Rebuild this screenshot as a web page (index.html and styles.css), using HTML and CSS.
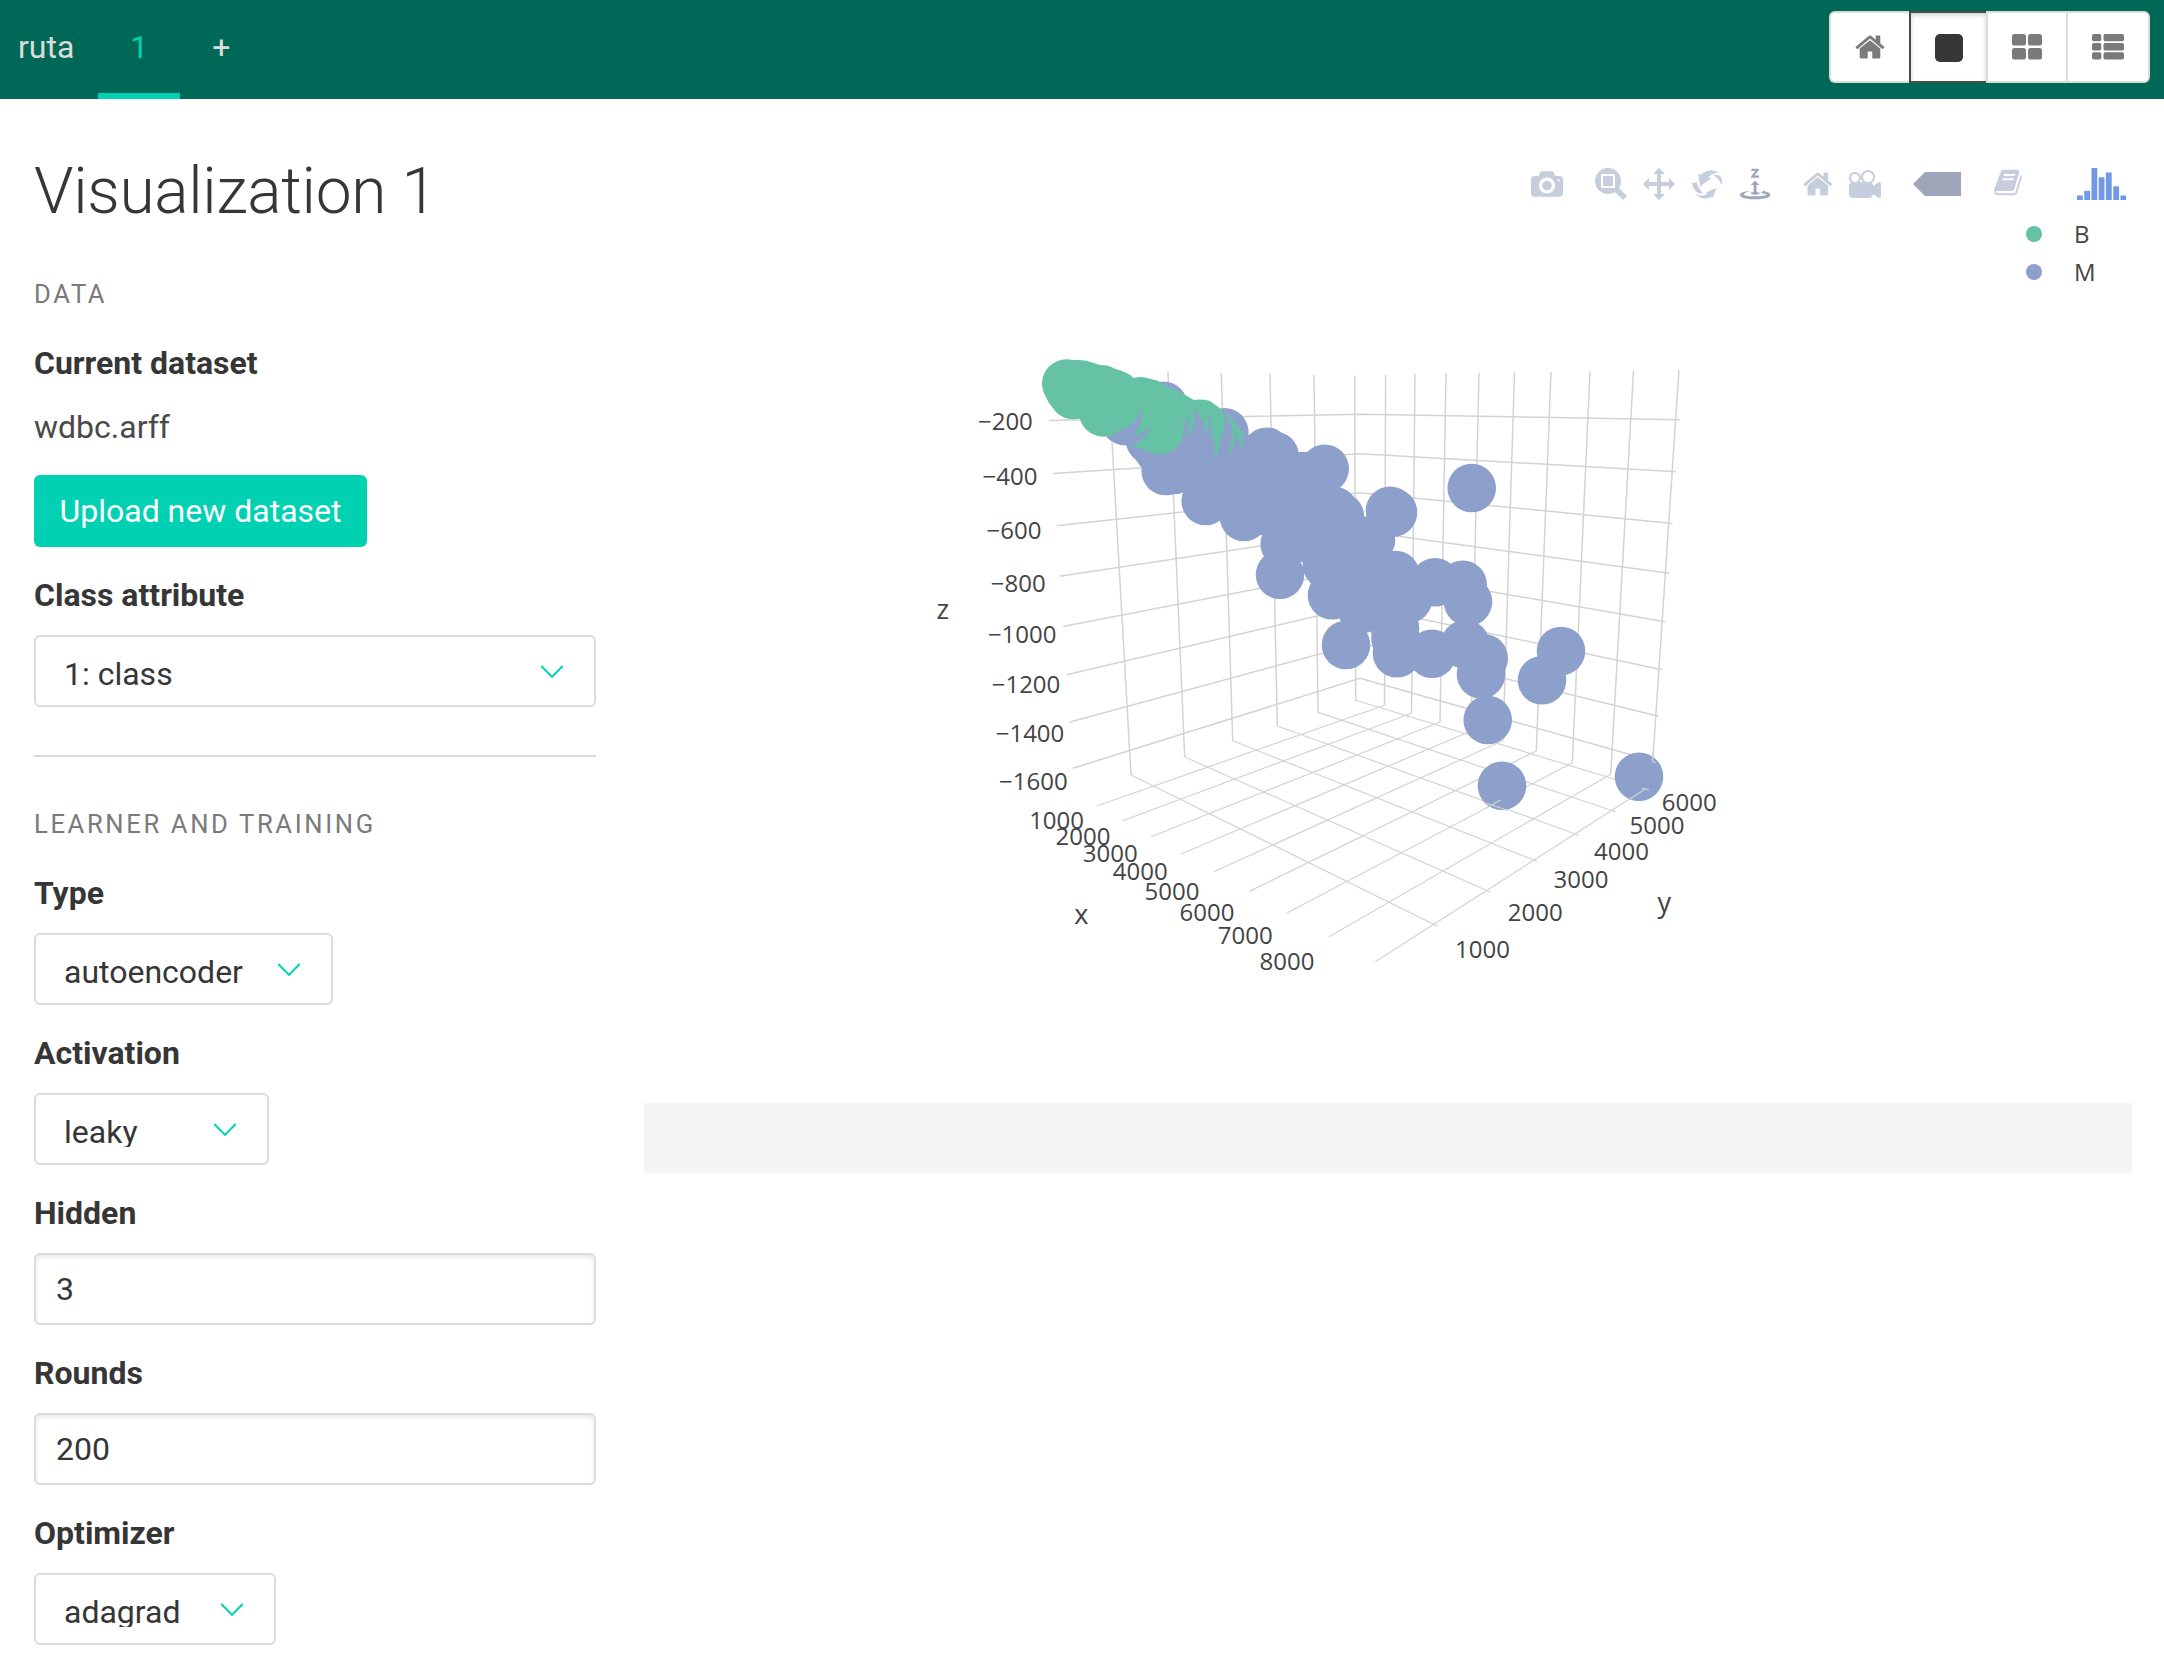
FILE: index.html
```html
<!DOCTYPE html>
<html lang="en">
<head>
<meta charset="utf-8">
<title>ruta</title>
<link rel="stylesheet" href="styles.css">
</head>
<body>
<header class="navbar">
  <nav class="tabs">
    <a class="brand">ruta</a>
    <a class="tab tab-active">1</a>
    <a class="tab">+</a>
  </nav>
  <div class="layouts">
    <button class="layout-btn btn-home"><svg width="32" height="32" viewBox="0 0 1792 1792"><path d="M1472 992v480q0 26-19 45t-45 19h-384v-384h-256v384h-384q-26 0-45-19t-19-45v-480q0-1 .5-3t.5-3l575-474 575 474q1 2 1 6zm223-69l-62 74q-8 9-21 11h-3q-13 0-21-7l-692-577-692 577q-12 8-24 7-13-2-21-11l-62-74q-8-10-7-23.5t11-21.5l719-599q32-26 76-26t76 26l244 204v-195q0-14 9-23t23-9h192q14 0 23 9t9 23v408l219 182q10 8 11 21.5t-7 23.5z"/></svg></button>
    <button class="layout-btn btn-single"><svg width="28" height="28" viewBox="0 0 28 28"><rect width="28" height="28" rx="5"/></svg></button>
    <button class="layout-btn btn-grid"><svg width="30" height="26" viewBox="0 0 30 26"><rect width="14" height="11.6" rx="2.6"/><rect x="16" width="14" height="11.6" rx="2.6"/><rect y="14" width="14" height="11.6" rx="2.6"/><rect x="16" y="14" width="14" height="11.6" rx="2.6"/></svg></button>
    <button class="layout-btn btn-list"><svg width="32" height="26" viewBox="0 0 32 26"><rect width="9.3" height="7.3" rx="1.7"/><rect x="11.5" width="20.5" height="7.3" rx="1.7"/><rect y="9.1" width="9.3" height="7.3" rx="1.7"/><rect x="11.5" y="9.1" width="20.5" height="7.3" rx="1.7"/><rect y="18.2" width="9.3" height="7.3" rx="1.7"/><rect x="11.5" y="18.2" width="20.5" height="7.3" rx="1.7"/></svg></button>
  </div>
</header>
<main class="content">
  <section class="sidebar">
    <h1 class="title">Visualization 1</h1>
    <p class="menu-label">Data</p>
    <label class="label">Current dataset</label>
    <p class="filename">wdbc.arff</p>
    <button class="upload">Upload new dataset</button>
    <label class="label">Class attribute</label>
    <div class="select select-class"><span class="select-text">1: class</span><svg class="chevron" viewBox="0 0 24 14"><path d="M1.3 1 12 11.9 22.7 1"/></svg></div>
    <hr class="divider">
    <p class="menu-label">Learner and training</p>
    <label class="label">Type</label>
    <div class="select select-type"><span class="select-text">autoencoder</span><svg class="chevron" viewBox="0 0 24 14"><path d="M1.3 1 12 11.9 22.7 1"/></svg></div>
    <label class="label">Activation</label>
    <div class="select select-activation"><span class="select-text">leaky</span><svg class="chevron" viewBox="0 0 24 14"><path d="M1.3 1 12 11.9 22.7 1"/></svg></div>
    <label class="label">Hidden</label>
    <div class="input">3</div>
    <label class="label">Rounds</label>
    <div class="input">200</div>
    <label class="label">Optimizer</label>
    <div class="select select-optimizer"><span class="select-text">adagrad</span><svg class="chevron" viewBox="0 0 24 14"><path d="M1.3 1 12 11.9 22.7 1"/></svg></div>
  </section>
  <section class="plot-column">
    <div class="modebar">
      <div class="group">
        <svg width="32" height="32" viewBox="0 0 1000 1000"><path transform="matrix(1 0 0 -1 0 850)" d="m500 450c-83 0-150-67-150-150 0-83 67-150 150-150 83 0 150 67 150 150 0 83-67 150-150 150z m400 150h-120c-16 0-34 13-39 29l-31 93c-6 15-23 28-40 28h-340c-16 0-34-13-39-28l-31-94c-6-15-23-28-40-28h-120c-55 0-100-45-100-100v-450c0-55 45-100 100-100h800c55 0 100 45 100 100v450c0 55-45 100-100 100z m-400-550c-138 0-250 112-250 250 0 138 112 250 250 250 138 0 250-112 250-250 0-138-112-250-250-250z m365 380c-19 0-35 16-35 35 0 19 16 35 35 35 19 0 35-16 35-35 0-19-16-35-35-35z"/></svg>
      </div>
      <div class="group">
        <svg width="32" height="32" viewBox="0 0 1000 1000"><path transform="matrix(1 0 0 -1 0 850)" d="m1000-25l-250 251c40 63 63 138 63 218 0 224-182 406-407 406-224 0-406-182-406-406s183-406 407-406c80 0 155 22 218 62l250-250 125 125z m-812 250l0 438 437 0 0-438-437 0z m62 375l313 0 0-312-313 0 0 312z"/></svg>
        <svg width="32" height="32" viewBox="0 0 1000 1000"><path transform="matrix(1 0 0 -1 0 850)" d="m1000 350l-187 188 0-125-250 0 0 250 125 0-188 187-187-187 125 0 0-250-250 0 0 125-188-188 186-187 0 125 252 0 0-250-125 0 187-188 188 188-125 0 0 250 250 0 0-126 187 188z"/></svg>
        <svg width="32" height="32" viewBox="0 0 1000 1000"><path transform="matrix(1 0 0 -1 0 850)" d="m922 660c-5 4-9 7-14 11-359 263-580-31-580-31l-102 28 58-400c0 1 1 1 2 2 118 108 351 249 351 249s-62 27-100 42c88 83 222 183 347 122 16-8 30-17 44-27-2 1-4 2-6 4z m36-329c0 0 64 229-88 296-62 27-124 14-175-11 157-78 225-208 249-266 8-19 11-31 11-31 2 5 6 15 11 32-5-13-8-20-8-20z m-775-239c70-31 117-50 198-32-121 80-199 346-199 346l-96-15-58-12c0 0 55-226 155-287z m603 133l-317-139c0 0 4-4 19-14 7-5 24-15 24-15s-177-147-389 4c235-287 536-112 536-112l31-22 100 299-4-1z m-298-153c6-4 14-9 24-15 0 0-17 10-24 15z"/></svg>
        <svg class="on" width="32" height="32" viewBox="0 0 1000 1000"><path transform="matrix(1 0 0 -1 0 850)" d="m833 5l-17 108v41l-130-65 130-66c0 0 0 38 0 39 0-1 36-14 39-25 4-15-6-22-16-30-15-12-39-16-56-20-90-22-187-23-279-23-261 0-341 34-353 59 3 60 228 110 228 110-140-8-351-35-351-116 0-120 293-142 474-142 155 0 477 22 477 142 0 50-74 79-163 96z m-374 94c-58-5-99-21-99-40 0-24 65-43 144-43 79 0 143 19 143 43 0 19-42 34-98 40v216h87l-132 135-133-135h88v-216z m167 515h-136v1c16 16 31 34 46 52l84 109v54h-230v-71h124v-1c-16-17-28-32-44-51l-89-114v-51h245v72z"/></svg>
      </div>
      <div class="group">
        <svg width="29.7" height="32" viewBox="0 0 928.6 1000"><path transform="matrix(1 0 0 -1 0 850)" d="m786 296v-267q0-15-11-26t-25-10h-214v214h-143v-214h-214q-15 0-25 10t-11 26v267q0 1 0 2t0 2l321 264 321-264q1-1 1-4z m124 39l-34-41q-5-5-12-6h-2q-7 0-12 3l-386 322-386-322q-7-4-13-4-7 2-12 7l-35 41q-4 5-3 13t6 12l401 334q18 15 42 15t43-15l136-114v109q0 8 5 13t13 5h107q8 0 13-5t5-13v-227l122-102q5-5 6-12t-4-13z"/></svg>
        <svg width="32" height="32" viewBox="0 0 1000 1000"><path transform="matrix(1 0 0 -1 0 850)" d="m938 413l-188-125c0 37-17 71-44 94 64 38 107 107 107 187 0 121-98 219-219 219-121 0-219-98-219-219 0-61 25-117 66-156h-115c30 33 49 76 49 125 0 103-84 187-187 187s-188-84-188-187c0-57 26-107 65-141-38-22-65-62-65-109v-250c0-70 56-126 125-126h500c69 0 125 56 125 126l188-126c34 0 62 28 62 63v375c0 35-28 63-62 63z m-750 0c-69 0-125 56-125 125s56 125 125 125 125-56 125-125-56-125-125-125z m406-1c-87 0-157 70-157 157 0 86 70 156 157 156s156-70 156-156-70-157-156-157z"/></svg>
      </div>
      <div class="group">
        <svg class="on" width="48" height="32" viewBox="0 0 1500 1000"><path transform="matrix(1 0 0 -1 0 850)" d="m375 725l0 0-375-375 375-374 0-1 1125 0 0 750-1125 0z"/></svg>
      </div>
      <div class="group">
        <svg width="30" height="32" viewBox="0 90 1792 1792"><path d="M1703 478q40 57 18 129l-275 906q-19 64-76.500 107.500t-122.500 43.500h-923q-77 0-148.500-53.500t-99.500-131.500q-24-67-2-127 0-4 3-27t4-37q1-8-3-21.500t-3-19.500q2-11 8-21t16.500-23.500 16.500-23.500q23-38 45-91.500t30-91.500q3-10 .5-30t-.5-28q3-11 17-28t17-23q21-36 42-92t25-90q1-9-2.500-32t.5-28q4-13 22-30.500t22-22.500q19-26 42.500-84.500t27.500-96.500q1-8-3-25.500t-2-26.500q2-8 9-18t18-23 17-21q8-12 16.500-30.500t15-35 16-36 19.500-32 26.500-23.500 36-11.500 47.500 5.500l-1 3q38-9 51-9h761q74 0 114 56t18 130l-274 906q-36 119-71.500 153.500t-128.500 34.500h-869q-27 0-38 15-11 16-1 43 24 70 144 70h923q29 0 56-15.500t35-41.500l300-987q7-22 5-57 38 15 59 43zm-1064 2q-4 13 2 22.500t20 9.500h608q13 0 25.500-9.500t16.500-22.500l21-64q4-13-2-22.500t-20-9.500h-608q-13 0-25.500 9.500t-16.500 22.500zm-83 256q-4 13 2 22.500t20 9.500h608q13 0 25.500-9.500t16.500-22.500l21-64q4-13-2-22.500t-20-9.500h-608q-13 0-25.500 9.500t-16.500 22.500z"/></svg>
      </div>
      <div class="group logo">
        <svg width="49.300" height="32" viewBox="0 0 1542 1000"><path transform="matrix(1 0 0 -1 0 850)" d="m0-10h182v-140h-182v140z m228 146h183v-286h-183v286z m225 714h182v-1000h-182v1000z m225-285h182v-715h-182v715z m225 142h183v-857h-183v857z m231-428h182v-429h-182v429z m225-291h183v-138h-183v138z"/></svg>
      </div>
    </div>
    <svg class="plot" viewBox="644 200 1488 903">
      <!-- walls -->
      <path class="grid" d="M1049 420.400 1360 414.300 1680 419.700M1053 473.500 1360 453.700 1676 471.800M1056.500 525.700 1360 492.700 1672.500 523.400M1059.700 576.300 1360 531 1669 573.300M1063 626.500 1360 569 1665 621.700M1066.500 674.700 1360 606 1662 669.700M1070 722 1360 643 1658.700 716.300M1073 768.200 1360 678.300 1655 761.500"/>
      <path class="grid" d="M1108 371 1131 775M1168 372 1184.700 757M1221.300 373 1232.700 740.800M1270 374 1277.300 726M1314 375 1318 712.400M1354.700 375.700 1355.700 700.300M1385.600 375 1384.500 705.300M1415 374 1411.500 713.300M1446 373.500 1440 722M1479 373 1471 731M1514.500 372.500 1503 740.500M1551 372 1536.300 751M1590 371.500 1572.300 762.700M1633.500 371 1610.700 774.300M1679 370 1652.700 762"/>
      <!-- floor -->
      <path class="grid floor" d="M1096.700 806 1384.500 705.300M1122.700 820.800 1411.500 713.300M1151 836.700 1440 722M1181 854 1471 731M1213.700 871.800 1503 740.500M1249.300 891.400 1536.300 751M1287 913 1572.300 762.700M1329 936.700 1610.700 774.300M1375.300 961.700 1646 788.500"/>
      <path class="grid floor" d="M1131 775 1437.300 926M1184.700 757 1490.700 892.300M1232.700 740.800 1537 861.300M1277.300 726 1579 835.300M1318 712.400 1615.700 811.700M1355.700 700.300 1650 790"/>
      <g class="m">
        <path d="M1125 421 1163 400 1188 402 1224 420 1249 435 1267 440 1303 455 1325 470 1345 520 1375 550 1400 575 1410 600 1395 640 1335 595 1285 545 1205 505 1165 475 1141 467 1133 456 1126 445z"/>
        <circle cx="1163.300" cy="405.700" r="24.300"/><circle cx="1224.300" cy="432.300" r="24.300"/><circle cx="1266.700" cy="451.700" r="24.300"/><circle cx="1274.700" cy="456" r="24.300"/><circle cx="1324.700" cy="468.700" r="24.300"/><circle cx="1303" cy="476" r="24.300"/>
        <circle cx="1125" cy="421" r="24.300"/><circle cx="1150" cy="440" r="24.300"/><circle cx="1165.700" cy="471" r="24.300"/><circle cx="1174" cy="470" r="24.300"/><circle cx="1205.700" cy="501" r="24.300"/><circle cx="1244" cy="517" r="24.300"/><circle cx="1260" cy="510.700" r="24.300"/><circle cx="1284.700" cy="544" r="24.300"/><circle cx="1280" cy="574.700" r="24.300"/>
        <circle cx="1332" cy="595.300" r="24.300"/><circle cx="1327" cy="565" r="24.300"/><circle cx="1340" cy="516.700" r="24.300"/><circle cx="1334" cy="511" r="24.300"/><circle cx="1390" cy="510.700" r="24.300"/><circle cx="1393" cy="512.500" r="24.300"/><circle cx="1371" cy="540" r="24.300"/><circle cx="1395.500" cy="575" r="24.300"/>
        <circle cx="1435" cy="582.300" r="24.300"/><circle cx="1462.700" cy="584.700" r="24.300"/><circle cx="1468" cy="601.700" r="24.300"/><circle cx="1408" cy="599" r="24.300"/><circle cx="1395" cy="628" r="24.300"/><circle cx="1361.700" cy="609" r="24.300"/><circle cx="1346" cy="645" r="24.300"/><circle cx="1397" cy="653.300" r="24.300"/><circle cx="1395.500" cy="638" r="24.300"/><circle cx="1432" cy="653.700" r="24.300"/>
        <circle cx="1465.300" cy="644.300" r="24.300"/><circle cx="1483.700" cy="658.300" r="24.300"/><circle cx="1481" cy="674.300" r="24.300"/><circle cx="1487.700" cy="720" r="24.300"/><circle cx="1502" cy="785.700" r="24.300"/><circle cx="1639" cy="776.700" r="24.300"/><circle cx="1561" cy="651" r="24.300"/><circle cx="1542" cy="680.300" r="24.300"/><circle cx="1471.700" cy="488" r="24.300"/>
      </g>
      <g transform="translate(1020 340) scale(.33333)">
        <g class="b">
          <circle cx="139" cy="131" r="73"/><circle cx="148" cy="149" r="73"/><circle cx="160" cy="165" r="73"/><circle cx="165" cy="132" r="73"/><circle cx="185" cy="134" r="73"/><circle cx="205" cy="140" r="73"/><circle cx="245" cy="148" r="73"/><circle cx="275" cy="159" r="73"/><circle cx="290" cy="166" r="73"/><circle cx="250" cy="217" r="73"/><circle cx="330" cy="190" r="73"/><circle cx="362" cy="184" r="73"/><circle cx="385" cy="190" r="73"/><circle cx="418" cy="270" r="73"/><circle cx="378" cy="256" r="73"/><circle cx="408" cy="220" r="73"/>
          <path d="M400 122 450 145 470 150 492 163 522 180Q545 176 570 183L600 205Q616 225 614 250 612 280 601 295 602 330 583 362 582 345 586 325 575 280 576 262 570 235 543 197 562 225 566 250 567 275 561 292 560 250 520 200 530 230 520 260 512 280 502 288 514 250 503 210 505 240 497 258 492 240 488 240 470 215 468 197L440 200z"/>
          <path d="M612 215Q640 235 650 255 670 280 677 292 668 290 666 285 670 310 667 325 655 300 650 285L645 262Q648 290 640 320 630 345 622 340 635 310 637 262 630 240 612 215z"/>
        </g>
        <path class="m" d="M365 210C355 240 320 272 262 292L285 307 315 316 328 318C360 310 385 285 390 257 375 275 355 285 338 288 360 265 370 240 365 210z"/>
      </g>
      <path class="grid floor" d="M1652.700 752v10l3.500.5M1628.500 800 1646 788.500M1642 788l7 2M1484 809 1500.700 800M1486 803l22 7.500"/>
      <g class="tick">
        <text x="1005.400" y="430">−200</text><text x="1010" y="485.400">−400</text><text x="1014" y="538.800">−600</text><text x="1018.300" y="591.900">−800</text><text x="1022.200" y="643.100">−1000</text><text x="1026" y="692.900">−1200</text><text x="1030" y="742">−1400</text><text x="1033.400" y="789.800">−1600</text>
        <text x="1056.600" y="828.800">1000</text><text x="1083" y="844.700">2000</text><text x="1110.300" y="861.600">3000</text><text x="1140.300" y="880">4000</text><text x="1172" y="899.600">5000</text><text x="1207" y="920.800">6000</text><text x="1245.300" y="944">7000</text><text x="1287" y="970">8000</text>
        <text x="1689.300" y="811.300">6000</text><text x="1657" y="834">5000</text><text x="1621.500" y="859.600">4000</text><text x="1581" y="888">3000</text><text x="1535.300" y="920.500">2000</text><text x="1482.500" y="957.600">1000</text>
      </g>
      <g class="axis"><text x="942.800" y="619">z</text><text x="1081.300" y="924">x</text><text x="1664.300" y="911.500">y</text></g>
      <circle class="b" cx="2034" cy="234" r="8"/><circle class="m" cx="2034" cy="272" r="8"/>
      <g class="legend"><text x="2074" y="242.700">B</text><text x="2074" y="281">M</text></g>
    </svg>
    <div class="console"></div>
  </section>
</main>
</body>
</html>
```
FILE: styles.css
```css
* { box-sizing: border-box; }
html, body { margin: 0; }
body {
  width: 2164px; height: 1666px; overflow: hidden;
  background: #fff; color: #363636;
  font: 400 32px/48px Roboto, sans-serif;
}
.navbar { display: flex; justify-content: space-between; height: 99px; background: #006856; padding-left: 18px; }
.tabs { display: flex; color: #dbdbdb; line-height: 94px; }
.brand { padding-right: 24px; }
.tab { padding: 0 32px; }
.tab-active { width: 82px; color: #00d1b2; border-bottom: 6px solid #00d1b2; }
.layouts { display: flex; width: 321px; height: 72px; margin: 11px 14px 0 0; }
.layout-btn {
  display: flex; justify-content: center; align-items: flex-start;
  padding: 21px 0 0; background: #fff; border: 2px solid #dbdbdb; border-right: 0; fill: #7a7a7a;
}
.btn-home { width: 80px; border-radius: 6px 0 0 6px; padding-top: 18px; }
.btn-single { width: 77px; border-color: #4a4a4a; fill: #363636; box-shadow: inset 0 2px 4px rgba(10,10,10,.2); }
.btn-grid { width: 80px; }
.btn-list { width: 84px; border-right: 2px solid #dbdbdb; border-radius: 0 6px 6px 0; }

.content { display: flex; gap: 48px; padding-left: 34px; }
.sidebar { display: flex; flex-direction: column; align-items: flex-start; width: 562px; padding-top: 57px; }
.title { margin: 0 0 47px; font-size: 64px; line-height: 72px; font-weight: 300; letter-spacing: -.3px; }
.menu-label { margin: 0 0 25.6px; font-size: 25.6px; line-height: 38.4px; letter-spacing: 2.64px; text-transform: uppercase; color: #7a7a7a; }
.label { margin-bottom: 16px; font-weight: 700; }
.filename { margin: 0 0 24px; color: #4a4a4a; }
.upload { width: 333px; height: 72px; padding: 0; margin-bottom: 24px; border: 0; border-radius: 6px; background: #00d1b2; color: #fff; font: inherit; }
.select { display: flex; justify-content: space-between; height: 72px; padding: 16px 30px 0 28px; margin-bottom: 24px; border: 2px solid #dbdbdb; border-radius: 6px; }
.select-text { height: 36px; line-height: 42px; overflow: hidden; }
.chevron { width: 24px; height: 14px; margin-top: 12px; fill: none; stroke: #00d1b2; stroke-width: 2; }
.select-class { width: 562px; }
.select-type { width: 299px; }
.select-activation { width: 235px; }
.select-optimizer { width: 242px; }
.divider { width: 100%; height: 2px; margin: 24px 0 48px; border: 0; background: #dbdbdb; }
.input { width: 562px; height: 72px; padding-left: 20px; margin-bottom: 24px; line-height: 68px; border: 2px solid #dbdbdb; border-radius: 6px; box-shadow: inset 0 2px 4px rgba(10,10,10,.1); }

.plot-column { display: flex; flex-direction: column; width: 1488px; padding-top: 69px; }
.modebar { display: flex; justify-content: flex-end; gap: 32px; height: 32px; padding-right: 6px; fill: #c6cddc; }
.group { display: flex; gap: 16px; }
.on { fill: #9ea6b9; }
.logo { margin-left: 22px; fill: #7299e3; }
.plot { display: block; width: 1488px; height: 903px; }
.grid { fill: none; stroke: #d3d3d3; stroke-width: 1.5; }
.floor { stroke-width: 1.2; }
.m { fill: #8da0cb; }
.b { fill: #66c2a5; }
.tick, .axis, .legend { font-family: "Open Sans", sans-serif; font-size: 24px; fill: #444; }
.tick, .axis { text-anchor: middle; }
.axis { font-size: 27px; }
.console { height: 70px; background: #f5f5f5; }
```
